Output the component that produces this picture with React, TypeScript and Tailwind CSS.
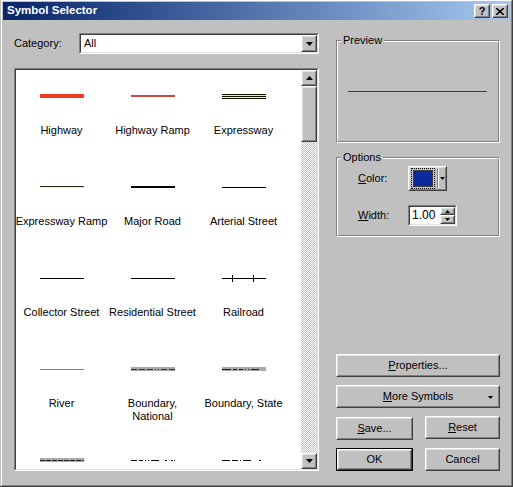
import React from "react";

const font = "font-['Liberation_Sans',Arial,sans-serif]";

// classic 3D edges
function Raised({ className = "", children }: { className?: string; children?: React.ReactNode }) {
  return (
    <div className={`border border-t-white border-l-white border-r-[#404040] border-b-[#404040] bg-[#c0c0c0] ${className}`}>
      <div className="flex h-full w-full items-center justify-center border border-t-[#dfdfdf] border-l-[#dfdfdf] border-r-[#808080] border-b-[#808080]">
        {children}
      </div>
    </div>
  );
}

function Sunken({ className = "", children }: { className?: string; children?: React.ReactNode }) {
  return (
    <div className={`border border-t-[#808080] border-l-[#808080] border-r-white border-b-white ${className}`}>
      <div className="flex h-full w-full border border-t-[#404040] border-l-[#404040] border-r-[#dfdfdf] border-b-[#dfdfdf] bg-white">
        {children}
      </div>
    </div>
  );
}

function Group({ label, className = "", children }: { label: string; className?: string; children?: React.ReactNode }) {
  return (
    <div className={`relative border border-t-[#808080] border-l-[#808080] border-r-white border-b-white ${className}`}>
      <div className="h-full w-full border border-t-white border-l-white border-r-[#808080] border-b-[#808080]">
        {children}
      </div>
      <span className="absolute -top-[7px] left-[4px] bg-[#c0c0c0] px-[2px] leading-[13px]">{label}</span>
    </div>
  );
}

function Arrow({ dir }: { dir: "up" | "down" }) {
  return (
    <svg width="7" height="4" viewBox="0 0 7 4">
      {dir === "up" ? <polygon points="3.5,0 7,4 0,4" fill="#000" /> : <polygon points="0,0 7,0 3.5,4" fill="#000" />}
    </svg>
  );
}

function SmallArrow({ dir }: { dir: "up" | "down" }) {
  return (
    <svg width="5" height="3" viewBox="0 0 5 3">
      {dir === "up" ? <polygon points="2.5,0 5,3 0,3" fill="#000" /> : <polygon points="0,0 5,0 2.5,3" fill="#000" />}
    </svg>
  );
}

const gray = "#a9a9a9";

const symbols: { label: React.ReactNode; draw: React.ReactNode }[] = [
  { label: "Highway", draw: <rect x="0" y="2" width="44" height="4" fill="#ec3b1f" /> },
  { label: "Highway Ramp", draw: <rect x="0" y="3" width="44" height="2" fill="#c8483c" /> },
  {
    label: "Expressway",
    draw: (
      <g>
        <rect x="0" y="2" width="44" height="5" fill="#f2eca0" />
        <rect x="0" y="2" width="44" height="1" fill="#141400" />
        <rect x="0" y="4" width="44" height="1" fill="#141400" />
        <rect x="0" y="6" width="44" height="1" fill="#141400" />
      </g>
    ),
  },
  {
    label: "Expressway Ramp",
    draw: (
      <g>
        <rect x="0" y="3" width="44" height="1" fill="#2a2a10" />
        <rect x="0" y="4" width="44" height="1" fill="#f4eeb0" />
      </g>
    ),
  },
  { label: "Major Road", draw: <rect x="0" y="3" width="44" height="2" fill="#000" /> },
  { label: "Arterial Street", draw: <rect x="0" y="4" width="44" height="1" fill="#000" /> },
  { label: "Collector Street", draw: <rect x="0" y="4" width="44" height="1" fill="#000" /> },
  { label: "Residential Street", draw: <rect x="0" y="4" width="44" height="1" fill="#000" /> },
  {
    label: "Railroad",
    draw: (
      <g>
        <rect x="0" y="4" width="44" height="1" fill="#000" />
        <rect x="10" y="1" width="1" height="7" fill="#000" />
        <rect x="31" y="1" width="1" height="7" fill="#000" />
      </g>
    ),
  },
  { label: "River", draw: <rect x="0" y="4" width="44" height="1" fill="#2f96d2" /> },
  {
    label: (
      <>
        Boundary,
        <br />
        National
      </>
    ),
    draw: (
      <g>
        <rect x="0" y="2" width="44" height="4" fill={gray} />
        <line x1="0" y1="4.5" x2="44" y2="4.5" stroke="#303030" strokeWidth="1" strokeDasharray="6 2 6 2 6 2 1 2 1 2" />
      </g>
    ),
  },
  {
    label: "Boundary, State",
    draw: (
      <g>
        <rect x="0" y="2" width="44" height="4" fill={gray} />
        <line x1="0" y1="4.5" x2="44" y2="4.5" stroke="#202020" strokeWidth="1" strokeDasharray="9 2 4 2 4 2 1 2 1 2 8" />
      </g>
    ),
  },
  {
    label: "",
    draw: (
      <g>
        <rect x="0" y="2" width="44" height="4" fill={gray} />
        <line x1="0" y1="4.5" x2="44" y2="4.5" stroke="#202020" strokeWidth="1" strokeDasharray="5 1" />
      </g>
    ),
  },
  {
    label: "",
    draw: <line x1="0" y1="4.5" x2="44" y2="4.5" stroke="#000" strokeWidth="1" strokeDasharray="6 2 4 2 1 2 1 2 8" />,
  },
  {
    label: "",
    draw: <line x1="0" y1="4.5" x2="44" y2="4.5" stroke="#000" strokeWidth="1" strokeDasharray="8 2 6 2 1 2 8" />,
  },
];

function U({ children }: { children: React.ReactNode }) {
  return <span className="underline underline-offset-[1px]">{children}</span>;
}

export default function App() {
  return (
    <div className={`h-[487px] w-[513px] overflow-hidden border-r border-b border-r-[#404040] border-b-[#404040] bg-[#c0c0c0] text-[11px] text-black ${font}`}>
      <div className="h-full pl-px">
        <div className="flex h-full flex-col border border-t-white border-l-white border-r-[#808080] border-b-[#808080] p-px">
          {/* title bar */}
          <div className="flex h-[18px] shrink-0 items-center bg-gradient-to-r from-[#0a246a] to-[#a6caf0] pl-[4px] pr-[2px]">
            <span className="flex-1 text-[11.5px] font-bold text-white">Symbol Selector</span>
            <Raised className="h-[14px] w-[16px]">
              <span className="text-[11px] font-bold leading-none">?</span>
            </Raised>
            <Raised className="ml-[2px] h-[14px] w-[16px]">
              <svg width="8" height="7" viewBox="0 0 8 7">
                <path d="M0 0 L8 7 M8 0 L0 7" stroke="#000" strokeWidth="1.6" />
              </svg>
            </Raised>
          </div>

          {/* body */}
          <div className="flex gap-[17px] pl-[11px] pt-[13px]">
            {/* left column */}
            <div className="flex w-[305px] flex-col">
              <div className="flex h-[21px] items-center">
                <span className="w-[65px]">Category:</span>
                <Sunken className="h-[21px] w-[240px]">
                  <span className="flex-1 self-center pl-[3px] leading-[13px]">All</span>
                  <Raised className="h-full w-[16px]">
                    <Arrow dir="down" />
                  </Raised>
                </Sunken>
              </div>

              <Sunken className="mt-[14px] h-[403px]">
                <div className="flex-1 overflow-hidden">
                  <div className="grid w-[273px] grid-cols-3">
                    {symbols.map((s, i) => (
                      <div key={i} className="flex h-[91px] flex-col items-center">
                        <svg className="mt-[22px] shrink-0" width="44" height="8" viewBox="0 0 44 8">
                          {s.draw}
                        </svg>
                        <div className="mt-[24px] whitespace-nowrap text-center leading-[13px]">{s.label}</div>
                      </div>
                    ))}
                  </div>
                </div>
                {/* scrollbar */}
                <div className="flex w-[16px] flex-col bg-[repeating-conic-gradient(#ffffff_0%_25%,#c0c0c0_0%_50%)] bg-size-[2px_2px]">
                  <Raised className="h-[16px] w-[16px]">
                    <Arrow dir="up" />
                  </Raised>
                  <Raised className="h-[56px] w-[16px]" />
                  <div className="flex-1" />
                  <Raised className="h-[16px] w-[16px]">
                    <Arrow dir="down" />
                  </Raised>
                </div>
              </Sunken>
            </div>

            {/* right column */}
            <div className="flex h-[438px] w-[164px] flex-col">
              <Group label="Preview" className="mt-[7px] h-[103px]">
                <div className="ml-[10px] mt-[49px] h-px w-[139px] bg-[#1432b4]" />
              </Group>

              <Group label="Options" className="mt-[14px] h-[80px]">
                <div className="flex flex-col pl-[20px] pt-[7px]">
                  <div className="flex h-[25px] items-center">
                    <span className="w-[50px]">
                      <U>C</U>olor:
                    </span>
                    <Raised className="h-[25px] w-[39px]">
                      <div className="flex h-full w-full items-center pl-[1px]">
                        <div className="flex h-[21px] w-[24px] items-center justify-center border border-dotted border-black">
                          <div className="h-[17px] w-[20px] border border-[#404040] bg-[#0a2a9c]" />
                        </div>
                        <div className="ml-[2px] h-[19px] w-[2px] border-l border-l-[#808080] border-r border-r-white" />
                        <div className="flex flex-1 justify-center">
                          <SmallArrow dir="down" />
                        </div>
                      </div>
                    </Raised>
                  </div>
                  <div className="mt-[14px] flex h-[21px] items-center">
                    <span className="w-[50px]">
                      <U>W</U>idth:
                    </span>
                    <Sunken className="h-[21px] w-[49px]">
                      <span className="flex-1 self-center pl-[2px] text-[12px] leading-[13px]">1.00</span>
                      <div className="flex w-[15px] flex-col">
                        <Raised className="h-[8px] w-full">
                          <SmallArrow dir="up" />
                        </Raised>
                        <Raised className="h-[9px] w-full">
                          <SmallArrow dir="down" />
                        </Raised>
                      </div>
                    </Sunken>
                  </div>
                </div>
              </Group>

              <div className="mt-auto flex flex-col">
                <Raised className="h-[23px] w-full">
                  <span>
                    <U>P</U>roperties...
                  </span>
                </Raised>
                <Raised className="mt-[8px] h-[23px] w-full">
                  <div className="relative flex h-full w-full items-center justify-center">
                    <span>
                      <U>M</U>ore Symbols
                    </span>
                    <span className="absolute right-[5px] top-[9px]">
                      <SmallArrow dir="down" />
                    </span>
                  </div>
                </Raised>
                <div className="mt-[9px] flex justify-between">
                  <Raised className="h-[23px] w-[77px]">
                    <span>
                      <U>S</U>ave...
                    </span>
                  </Raised>
                  <Raised className="-mt-px h-[23px] w-[75px]">
                    <span>
                      <U>R</U>eset
                    </span>
                  </Raised>
                </div>
                <div className="mt-[8px] flex justify-between">
                  <div className="h-[23px] w-[77px] border border-black">
                    <Raised className="h-full w-full">
                      <span>OK</span>
                    </Raised>
                  </div>
                  <Raised className="h-[23px] w-[75px]">
                    <span>Cancel</span>
                  </Raised>
                </div>
              </div>
            </div>
          </div>
        </div>
      </div>
    </div>
  );
}
